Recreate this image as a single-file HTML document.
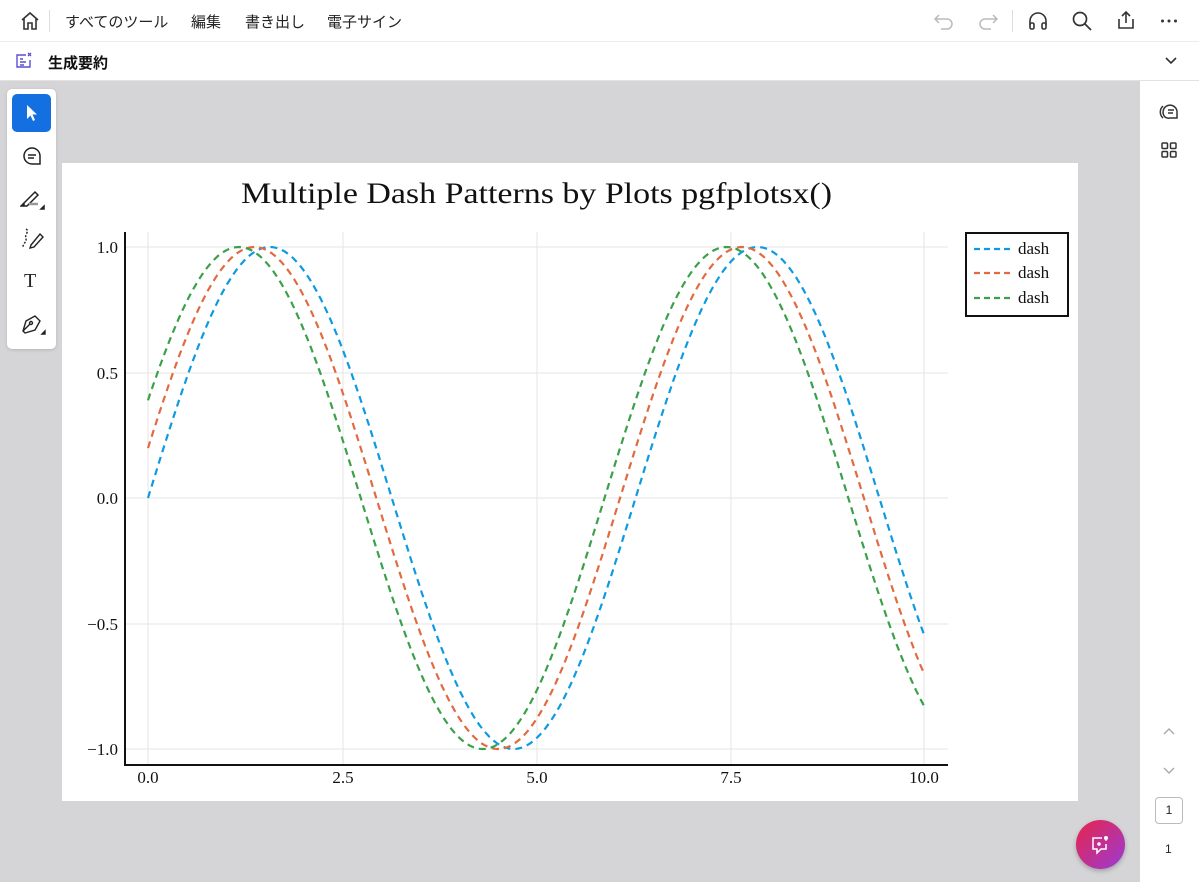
<!DOCTYPE html>
<html><head><meta charset="utf-8"><style>
*{margin:0;padding:0;box-sizing:border-box}
body{width:1199px;height:882px;overflow:hidden;background:#d5d4d7;font-family:"Liberation Sans","Noto Sans CJK JP",sans-serif;position:relative}
.top{position:absolute;left:0;top:0;width:1199px;height:42px;background:#fff;border-bottom:1px solid #ececec}
.sub{position:absolute;left:0;top:42px;width:1199px;height:39px;background:#fff;border-bottom:1px solid #e2e2e2}
.menu{position:absolute;top:11px;font-size:15px;color:#222}
.side{position:absolute;left:1140px;top:81px;width:59px;height:801px;background:#fff}
.tools{position:absolute;left:7px;top:89px;width:49px;height:260px;background:#fff;border-radius:5px;box-shadow:0 1px 3px rgba(0,0,0,.15)}
svg.ic{position:absolute}
</style></head><body>
<div class="top">
<svg class="ic" style="left:19px;top:10px" width="22" height="22" viewBox="0 0 22 22" fill="none" stroke="#333" stroke-width="1.6"><path d="M3 10 L11 3 L19 10 M5 8.5 V19 H9 V13 H13 V19 H17 V8.5"/></svg>
<div style="position:absolute;left:49px;top:10px;width:1px;height:22px;background:#ddd"></div>
<div class="menu" style="left:65px">すべてのツール</div>
<div class="menu" style="left:191px">編集</div>
<div class="menu" style="left:245px">書き出し</div>
<div class="menu" style="left:327px">電子サイン</div>
<svg class="ic" style="left:933px;top:12px" width="22" height="18" viewBox="0 0 22 18" fill="none" stroke="#bbb" stroke-width="1.5"><path d="M6 3 L2 7 L6 11 M2 7 H14 A5 5 0 0 1 14 17 H8"/></svg>
<svg class="ic" style="left:977px;top:12px" width="22" height="18" viewBox="0 0 22 18" fill="none" stroke="#bbb" stroke-width="1.5"><path d="M16 3 L20 7 L16 11 M20 7 H8 A5 5 0 0 0 8 17 H14"/></svg>
<div style="position:absolute;left:1012px;top:10px;width:1px;height:22px;background:#ddd"></div>
<svg class="ic" style="left:1027px;top:10px" width="22" height="22" viewBox="0 0 22 22" fill="none" stroke="#333" stroke-width="1.6"><path d="M3 15 V11 A8 8 0 0 1 19 11 V15"/><rect x="3" y="13" width="4" height="6" rx="1.5"/><rect x="15" y="13" width="4" height="6" rx="1.5"/></svg>
<svg class="ic" style="left:1071px;top:10px" width="22" height="22" viewBox="0 0 22 22" fill="none" stroke="#333" stroke-width="1.7"><circle cx="9" cy="9" r="6.5"/><path d="M14 14 L20 20"/></svg>
<svg class="ic" style="left:1115px;top:9px" width="22" height="22" viewBox="0 0 22 22" fill="none" stroke="#333" stroke-width="1.6"><path d="M11 14 V3 M7 7 L11 3 L15 7 M4 10 V19 H18 V10"/></svg>
<svg class="ic" style="left:1160px;top:18px" width="18" height="6" viewBox="0 0 18 6" fill="#333"><circle cx="2.5" cy="3" r="1.5"/><circle cx="9" cy="3" r="1.5"/><circle cx="15.5" cy="3" r="1.5"/></svg>
</div>
<div class="sub">
<svg class="ic" style="left:15px;top:10px" width="18" height="18" viewBox="0 0 18 18" fill="none" stroke="#5a4fcf" stroke-width="1.4"><path d="M11 3 H2 V15 H15 V8"/><path d="M5 7 H8 M5 10 H11 M5 13 H9"/><path d="M13 1 L16 4 M16 1 L13 4"/></svg>
<div style="position:absolute;left:48px;top:10px;font-size:15px;font-weight:bold;color:#111">生成要約</div>
<svg class="ic" style="left:1164px;top:13px" width="14" height="12" viewBox="0 0 14 12" fill="none" stroke="#333" stroke-width="1.6"><path d="M2 3 L7 8 L12 3"/></svg>
</div>
<div class="side">
<svg class="ic" style="left:18px;top:19px" width="22" height="22" viewBox="0 0 22 22" fill="none" stroke="#333" stroke-width="1.5"><path d="M7 17 A7 7 0 1 1 19 13 V18 H12 A6 6 0 0 1 7 17Z"/><path d="M5 6 A8 8 0 0 0 5 18" /><path d="M10 10 H16 M10 13 H15"/></svg>
<svg class="ic" style="left:20px;top:60px" width="18" height="18" viewBox="0 0 18 18" fill="none" stroke="#333" stroke-width="1.5"><rect x="2" y="2" width="5.5" height="5.5" rx="1"/><rect x="10.5" y="2" width="5.5" height="5.5" rx="1"/><rect x="2" y="10.5" width="5.5" height="5.5" rx="1"/><rect x="10.5" y="10.5" width="5.5" height="5.5" rx="1"/></svg>
<svg class="ic" style="left:22px;top:645px" width="14" height="12" viewBox="0 0 14 12" fill="none" stroke="#aaa" stroke-width="1.4"><path d="M2 8 L7 3 L12 8"/></svg>
<svg class="ic" style="left:22px;top:684px" width="14" height="12" viewBox="0 0 14 12" fill="none" stroke="#aaa" stroke-width="1.4"><path d="M2 3 L7 8 L12 3"/></svg>
<div style="position:absolute;left:15px;top:716px;width:28px;height:27px;border:1px solid #bbb;border-radius:4px;font-size:12px;text-align:center;line-height:25px;color:#222">1</div>
<div style="position:absolute;left:25px;top:761px;font-size:12px;color:#222">1</div>
</div>
<div class="tools">
<div style="position:absolute;left:5px;top:5px;width:39px;height:38px;background:#1470e0;border-radius:5px"></div>
<svg class="ic" style="left:17px;top:14px" width="16" height="20" viewBox="0 0 16 20"><path d="M3 2 L3 16 L6.5 12.5 L9 18 L11 17 L8.5 11.5 L13 11.5Z" fill="#fff"/></svg>
<svg class="ic" style="left:14px;top:56px" width="22" height="22" viewBox="0 0 22 22" fill="none" stroke="#222" stroke-width="1.5"><path d="M11 3 A8 8 0 1 0 11 19 H19 V11 A8 8 0 0 0 11 3Z"/><path d="M7 10 H15 M7 13 H13"/></svg>
<svg class="ic" style="left:13px;top:98px" width="26" height="24" viewBox="0 0 26 24" fill="none" stroke="#222" stroke-width="1.5"><path d="M4 16 L15 5 L18 8 L7 19 H4Z"/><path d="M9 17 H18" stroke="#999" stroke-width="2.5"/><path d="M1 19 L3 17 L3 19Z M21 22 L24 19 L24 22Z" fill="#222"/></svg>
<svg class="ic" style="left:13px;top:138px" width="26" height="24" viewBox="0 0 26 24" fill="none" stroke="#222" stroke-width="1.4"><path d="M11 18 L20 7 L23 10 L14 20 L10 21Z"/><path d="M6 2 C10 4 4 8 6 12 C7 15 3 16 3 20" stroke-dasharray="2 1.5"/></svg>
<div style="position:absolute;left:17px;top:181px;font-family:'Liberation Serif',serif;font-size:20px;color:#222">T</div>
<svg class="ic" style="left:13px;top:222px" width="28" height="26" viewBox="0 0 28 26" fill="none" stroke="#222" stroke-width="1.4"><path d="M3 20 L6 10 L15 5 L20 10 L15 19 L5 22Z"/><path d="M3 20 L10 13"/><circle cx="11" cy="12" r="1.5"/><path d="M22 23 L25 20 L25 23Z" fill="#222"/></svg>
</div>
<div style="position:absolute;left:62px;top:163px;width:1016px;height:638px;background:#fff"></div>
<svg style="position:absolute;left:0;top:0" width="1199" height="882" id="plot">
<text x="241" y="203" textLength="591" lengthAdjust="spacingAndGlyphs" font-family="Liberation Serif,serif" font-size="30" fill="#111">Multiple Dash Patterns by Plots pgfplotsx()</text>
<g stroke="#e4e4e4" stroke-width="1">
<path d="M148 232V765M343 232V765M537 232V765M731 232V765M924 232V765M125 247H948M125 373H948M125 498H948M125 624H948M125 749H948"/>
</g>
<g stroke="#111" stroke-width="2" fill="none"><path d="M125 232V765H948"/></g>
<g font-family="Liberation Serif,serif" font-size="17" fill="#111" text-anchor="end">
<text x="118" y="253">1.0</text><text x="118" y="379">0.5</text><text x="118" y="504">0.0</text><text x="118" y="630">−0.5</text><text x="118" y="755">−1.0</text>
</g>
<g font-family="Liberation Serif,serif" font-size="17" fill="#111" text-anchor="middle">
<text x="148" y="783">0.0</text><text x="343" y="783">2.5</text><text x="537" y="783">5.0</text><text x="731" y="783">7.5</text><text x="924" y="783">10.0</text>
</g>
<g id="curves" fill="none" stroke-width="2.2" stroke-dasharray="7 5"></g>
<rect x="966" y="233" width="102" height="83" fill="#fff" stroke="#111" stroke-width="2"/>
<g stroke-width="2.2" stroke-dasharray="6 4"><path d="M974 249H1010" stroke="#0d9ae0"/><path d="M974 273H1010" stroke="#e26a40"/><path d="M974 298H1010" stroke="#3aa04a"/></g>
<g font-family="Liberation Serif,serif" font-size="17" fill="#111"><text x="1018" y="254">dash</text><text x="1018" y="278">dash</text><text x="1018" y="303">dash</text></g>
</svg>
<div style="position:absolute;left:1076px;top:820px;width:49px;height:49px;border-radius:50%;background:linear-gradient(135deg,#e8244a,#9a3bd6);box-shadow:0 2px 5px rgba(0,0,0,.25)"></div>
<svg class="ic" style="left:1089px;top:833px" width="24" height="24" viewBox="0 0 24 24" fill="none" stroke="#fff" stroke-width="1.5"><path d="M13 5 H4 V16 H8 V20 L12 16 H17 V11"/><circle cx="10" cy="11" r="1" fill="#fff"/><path d="M17 3 L17 8 M15 5 L19 5 M15.5 3.5 L18.5 6.5 M18.5 3.5 L15.5 6.5" stroke-width="1.2"/></svg>
<script>
var g=document.getElementById('curves');
[[0,'#0d9ae0'],[0.2,'#e26a40'],[0.4,'#3aa04a']].forEach(function(c){
var d='';for(var i=0;i<=400;i++){var x=i*10/400;var X=148+x*77.6,Y=498-251*Math.sin(x+c[0]);d+=(i?'L':'M')+X.toFixed(1)+' '+Y.toFixed(1);}
var p=document.createElementNS('http://www.w3.org/2000/svg','path');p.setAttribute('d',d);p.setAttribute('stroke',c[1]);g.appendChild(p);});
</script>
</body></html>
